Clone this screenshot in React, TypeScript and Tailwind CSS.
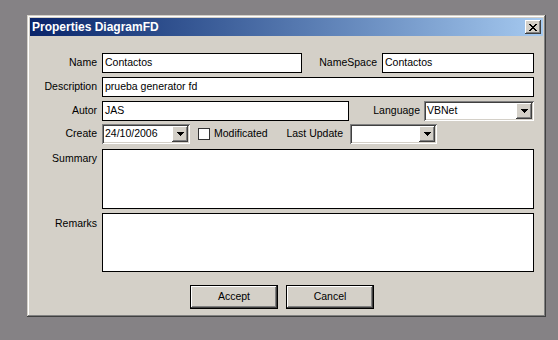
import React from "react";

const raised = "shadow-[inset_-1px_-1px_0_#404040,inset_1px_1px_0_#ffffff,inset_-2px_-2px_0_#808080]";
const sunken = "shadow-[inset_1px_1px_0_#808080,inset_-1px_-1px_0_#ffffff,inset_2px_2px_0_#404040,inset_-2px_-2px_0_#d4d0c8]";

function CloseGlyph() {
  const cells: [number, number, number][] = [
    [0, 0, 2], [6, 0, 2],
    [1, 1, 2], [5, 1, 2],
    [2, 2, 4],
    [3, 3, 2],
    [2, 4, 4],
    [1, 5, 2], [5, 5, 2],
    [0, 6, 2], [6, 6, 2],
  ];
  return (
    <svg width="8" height="7" viewBox="0 0 8 7" shapeRendering="crispEdges">
      {cells.map(([x, y, w], i) => (
        <rect key={i} x={x} y={y} width={w} height={1} fill="#000" />
      ))}
    </svg>
  );
}

function Arrow() {
  return (
    <svg width="7" height="4" viewBox="0 0 7 4" shapeRendering="crispEdges">
      <rect x={0} y={0} width={7} height={1} fill="#000" />
      <rect x={1} y={1} width={5} height={1} fill="#000" />
      <rect x={2} y={2} width={3} height={1} fill="#000" />
      <rect x={3} y={3} width={1} height={1} fill="#000" />
    </svg>
  );
}

function TextBox({ value, className = "" }: { value?: string; className?: string }) {
  return (
    <div className={`h-[20px] border border-black bg-white pl-[2px] flex items-center whitespace-nowrap ${className}`}>
      {value}
    </div>
  );
}

function Combo({ value, className = "" }: { value?: string; className?: string }) {
  return (
    <div className={`h-[20px] bg-white p-[2px] flex ${sunken} ${className}`}>
      <div className="flex-1 pl-[1px] flex items-center whitespace-nowrap">{value}</div>
      <div className={`w-[16px] h-[16px] bg-[#d4d0c8] flex items-center justify-center ${raised}`}>
        <Arrow />
      </div>
    </div>
  );
}

function Label({ children, className = "" }: { children: React.ReactNode; className?: string }) {
  return <div className={`w-[67px] mr-[5px] text-right shrink-0 ${className}`}>{children}</div>;
}

export default function App() {
  return (
    <div className="w-[558px] h-[340px] overflow-hidden bg-[#858285] pt-[15px] pl-[27px] font-['Liberation_Sans',Arial,sans-serif] text-[10.5px] text-black">
      <div className="w-[519px] h-[302px] bg-[#d4d0c8] p-[3px] shadow-[inset_-1px_-1px_0_#404040,inset_1px_1px_0_#d4d0c8,inset_-2px_-2px_0_#808080,inset_2px_2px_0_#ffffff]">
        {/* Title bar */}
        <div className="h-[18px] flex items-center justify-between pl-[2px] pr-[2px] bg-linear-to-r from-[#0a246a] to-[#a6caf0]">
          <span className="text-white font-bold text-[12px] leading-none">Properties DiagramFD</span>
          <div className={`w-[16px] h-[14px] bg-[#d4d0c8] flex items-center justify-center ${raised}`}>
            <CloseGlyph />
          </div>
        </div>

        <div className="pr-[9px] pt-[17px] flex flex-col">
          <div className="flex items-center">
            <Label>Name</Label>
            <TextBox value="Contactos" className="w-[200px]" />
            <div className="flex-1 text-right mr-[5px]">NameSpace</div>
            <TextBox value="Contactos" className="w-[152px]" />
          </div>

          <div className="flex items-center mt-[4px]">
            <Label>Description</Label>
            <TextBox value="prueba generator fd" className="flex-1" />
          </div>

          <div className="flex items-center mt-[4px]">
            <Label>Autor</Label>
            <TextBox value="JAS" className="w-[247px]" />
            <div className="flex-1 text-right mr-[4px]">Language</div>
            <Combo value="VBNet" className="w-[110px]" />
          </div>

          <div className="flex items-center mt-[3px]">
            <Label>Create</Label>
            <Combo value="24/10/2006" className="w-[88px]" />
            <div className="ml-[8px] w-[12px] h-[12px] border border-[#333] bg-white" />
            <span className="ml-[4px]">Modificated</span>
            <div className="flex-1 text-right mr-[7px]">Last Update</div>
            <Combo className="w-[87px]" />
            <div className="w-[97px]" />
          </div>

          <div className="flex mt-[5px]">
            <Label className="pt-[2px]">Summary</Label>
            <div className="flex-1 h-[60px] border border-black bg-white" />
          </div>

          <div className="flex mt-[4px]">
            <Label className="pt-[3px]">Remarks</Label>
            <div className="flex-1 h-[59px] border border-black bg-white" />
          </div>

          <div className="flex mt-[13px] ml-[160px] gap-[8px]">
            <button className={`w-[88px] h-[24px] bg-[#d4d0c8] border border-black flex items-center justify-center ${raised}`}>
              Accept
            </button>
            <button className={`w-[88px] h-[24px] bg-[#d4d0c8] border border-black flex items-center justify-center ${raised}`}>
              Cancel
            </button>
          </div>
        </div>
      </div>
    </div>
  );
}
